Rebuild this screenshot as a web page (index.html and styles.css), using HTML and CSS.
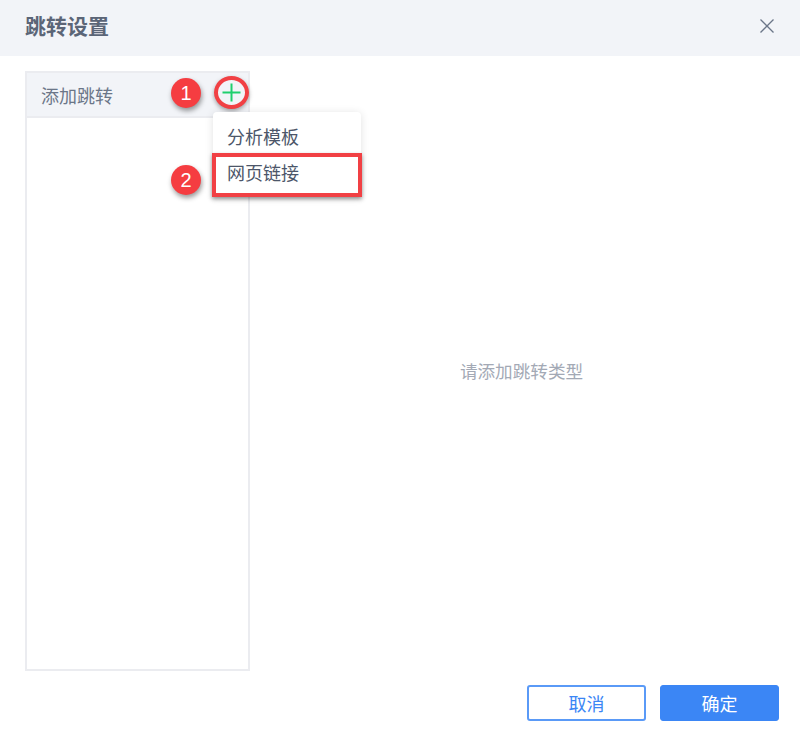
FILE: index.html
```html
<!DOCTYPE html>
<html lang="zh-CN">
<head>
  <meta charset="UTF-8"/>
  <title>跳转设置</title>
  <link rel="stylesheet" href="styles.css">
</head>
<body>
  <div class="dialog">
    <header class="dialog-head">
      <h1>跳转设置</h1>
      <svg class="close-icon" width="14" height="14" viewBox="0 0 14 14">
        <path d="M0.5 0.5L13.5 13.5M13.5 0.5L0.5 13.5" stroke="#6b7688" stroke-width="1.3" fill="none"/>
      </svg>
    </header>

    <main class="dialog-body">
      <section class="side-panel">
        <div class="side-head">
          <span>添加跳转</span>
          <span class="plus-ring">
            <svg width="19" height="19" viewBox="0 0 19 19">
              <path d="M9.5 0.5V18.5M0.5 9.5H18.5" stroke="#1fcf6e" stroke-width="2" fill="none"/>
            </svg>
          </span>
        </div>
        <span class="badge badge-one">1</span>
        <span class="badge badge-two">2</span>
        <ul class="add-menu">
          <li>分析模板</li>
          <li class="marked">网页链接</li>
        </ul>
      </section>
      <div class="empty-hint">请添加跳转类型</div>
    </main>

    <footer class="dialog-foot">
      <button class="btn btn-cancel">取消</button>
      <button class="btn btn-ok">确定</button>
    </footer>
  </div>
</body>
</html>
```

FILE: styles.css
```css
* { box-sizing: border-box; }
html, body { margin: 0; height: 100%; }
body {
  background: #fff;
  font-family: "Noto Sans CJK SC", "Liberation Sans", sans-serif;
  color: #5b6577;
  overflow: hidden;
}
.dialog { display: flex; flex-direction: column; height: 732px; }

.dialog-head {
  height: 56px;
  flex: none;
  display: flex;
  align-items: center;
  justify-content: space-between;
  padding: 0 26px 4px 25px;
  background: #f2f4f8;
}
.dialog-head h1 { margin: 0 0 2px; font-size: 21px; font-weight: 700; color: #5b6577; }

.dialog-body { flex: 1; display: flex; padding: 15px 21px 0 25px; min-height: 0; }
.side-panel {
  position: relative;
  width: 225px;
  height: 600px;
  flex: none;
  border: 2px solid #ebecf0;
}
.side-head {
  height: 45px;
  display: flex;
  align-items: center;
  justify-content: space-between;
  padding: 0 0 0 14px;
  background: #f2f4f8;
  border-bottom: 2px solid #ebecf0;
  font-size: 18px;
  color: #6b7688;
}
.plus-ring {
  width: 35px;
  height: 33px;
  margin: 0 -1px 4px 0;
  display: flex;
  align-items: center;
  justify-content: center;
  background: #f2f4f8;
  border: 4px solid #f14044;
  border-radius: 50%;
  box-shadow: 0 2px 4px rgba(0, 0, 0, 0.35);
}
.badge {
  position: absolute;
  width: 30px;
  height: 30px;
  left: 144px;
  display: flex;
  align-items: center;
  justify-content: center;
  background: #f53d41;
  border-radius: 50%;
  color: #fff;
  font-family: "Liberation Sans", sans-serif;
  font-size: 20px;
  box-shadow: 1px 3px 5px rgba(0, 0, 0, 0.4);
}
.badge-one { top: 5px; }
.badge-two { top: 92px; }

.add-menu {
  position: absolute;
  top: 39px;
  left: 186px;
  width: 148px;
  margin: 0;
  padding: 0;
  list-style: none;
  background: #fff;
  border-radius: 4px 4px 0 0;
  box-shadow: 0 1px 8px rgba(0, 0, 0, 0.12);
  font-size: 18px;
  color: #4c5669;
}
.add-menu li { height: 41px; padding: 7px 14px 0; line-height: 34px; }
.add-menu .marked {
  width: 150px;
  height: 44px;
  margin: 0 -1px;
  padding: 0 0 0 11px;
  line-height: 30px;
  border: 4px solid #f14044;
  box-shadow: 0 2px 4px rgba(0, 0, 0, 0.4);
}

.empty-hint {
  flex: 1;
  padding-top: 287px;
  padding-left: 14px;
  text-align: center;
  font-size: 17.6px;
  line-height: 26px;
  color: #a3a9b5;
}

.dialog-foot {
  flex: none;
  display: flex;
  justify-content: flex-end;
  gap: 14px;
  padding: 0 21px 11px 0;
}
.btn {
  width: 119px;
  height: 36px;
  padding: 0;
  border-radius: 3px;
  font-family: inherit;
  font-size: 18px;
  border: 1px solid #3b86f5;
}
.btn-cancel { background: #fff; color: #3b86f5; border: 2px solid #5a9af7; }
.btn-ok { background: #3b86f5; color: #fff; }
```
